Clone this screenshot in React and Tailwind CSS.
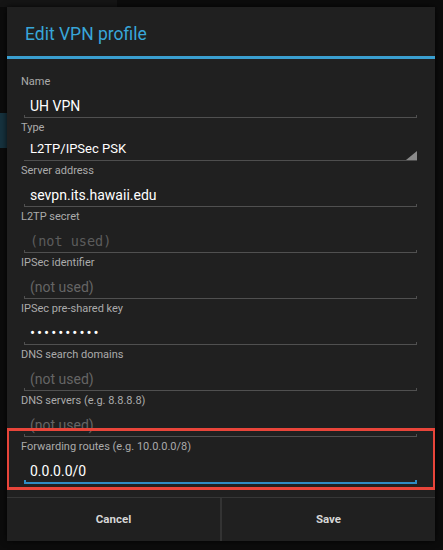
const fields = [
    { label: "Name", value: "UH VPN" },
    { label: "Type", value: "L2TP/IPSec PSK", spinner: true },
    { label: "Server address", value: "sevpn.its.hawaii.edu" },
    { label: "L2TP secret", hint: "(not used)", mono: true },
    { label: "IPSec identifier", hint: "(not used)" },
    { label: "IPSec pre-shared key", password: true },
    { label: "DNS search domains", hint: "(not used)" },
    { label: "DNS servers (e.g. 8.8.8.8)", hint: "(not used)" },
    { label: "Forwarding routes (e.g. 10.0.0.0/8)", value: "0.0.0.0/0", focused: true },
];

export default function App() {
    return (
        <div className="relative h-[550px] w-[443px] overflow-hidden bg-[#0c0c0c] pl-[7px] pt-[7px] font-['Roboto',sans-serif]">
            {/* what shows of the screen behind the dialog */}
            <div className="absolute left-0 top-0 h-[7px] w-[117px] bg-[#151515]" />
            <div className="absolute left-0 top-[113px] h-[35px] w-[7px] bg-[#16323e]" />

            <div className="relative flex h-[534px] w-[428px] flex-col bg-[#202020] shadow-[0_0_6px_rgba(0,0,0,0.8)]">
                {/* Title */}
                <div className="h-[49px] pl-[18px] pt-[15px] text-[17.5px] leading-[24px] text-[#38a6d8]">
                    Edit VPN profile
                </div>
                <div className="h-[3px] bg-[#3a9fd0]" />

                {/* Fields */}
                <div className="h-[438px] overflow-hidden pl-[14px] pr-[18px] pt-[16px]">
                    {fields.map((f) => (
                        <Field key={f.label} {...f} />
                    ))}
                </div>

                {/* Buttons */}
                <div className="flex h-[44px] border-t border-[#363636] text-[11.5px] font-bold text-[#d6d6d6]">
                    <button className="flex flex-1 items-center justify-center">Cancel</button>
                    <div className="w-[2px] bg-[#333333]" />
                    <button className="flex flex-1 items-center justify-center">Save</button>
                </div>
            </div>
        </div>
    );
}

function Field({ label, value, hint, mono, password, spinner, focused }) {
    if (spinner) {
        return (
            <div className="flex h-[43px] flex-col">
                <div className="text-[11px] leading-[14px] text-[#ababab]">{label}</div>
                <div className="mt-[5px] pl-[9px] text-[13px] leading-[18px] text-white">{value}</div>
                <div className="relative ml-[3px] h-[3px] border-b border-[#4e4e4e]">
                    <svg
                        className="absolute bottom-0 right-0"
                        width="11"
                        height="9"
                        viewBox="0 0 11 9"
                    >
                        <polygon points="11,0 11,9 0,9" fill="#8a8a8a" />
                    </svg>
                </div>
            </div>
        );
    }

    return (
        <div className="relative flex h-[46px] flex-col">
            <div className="text-[11px] leading-[14px] text-[#ababab]">{label}</div>
            <div className="mt-[8px] h-[18px] pl-[9px] text-[14px] leading-[18px]">
                {value && <span className="text-white">{value}</span>}
                {hint && (
                    <span
                        className={
                            mono
                                ? "font-['DejaVu_Sans_Mono',monospace] text-[13.5px] text-[#5c5c5c]"
                                : "text-[14px] text-[#656565]"
                        }
                    >
                        {hint}
                    </span>
                )}
                {password && (
                    <span className="tracking-[2px] text-[15px] text-white">••••••••••</span>
                )}
            </div>
            {focused ? (
                <div className="ml-[3px] h-[4px] border-x-2 border-b-2 border-[#2d8cc4]" />
            ) : (
                <div className="ml-[3px] h-[3px] border-x border-b border-[#505050]" />
            )}
            {focused && (
                <div className="pointer-events-none absolute -bottom-[4px] -left-[15px] -right-[19px] -top-[12px] border-[3px] border-[#e8453a]" />
            )}
        </div>
    );
}
